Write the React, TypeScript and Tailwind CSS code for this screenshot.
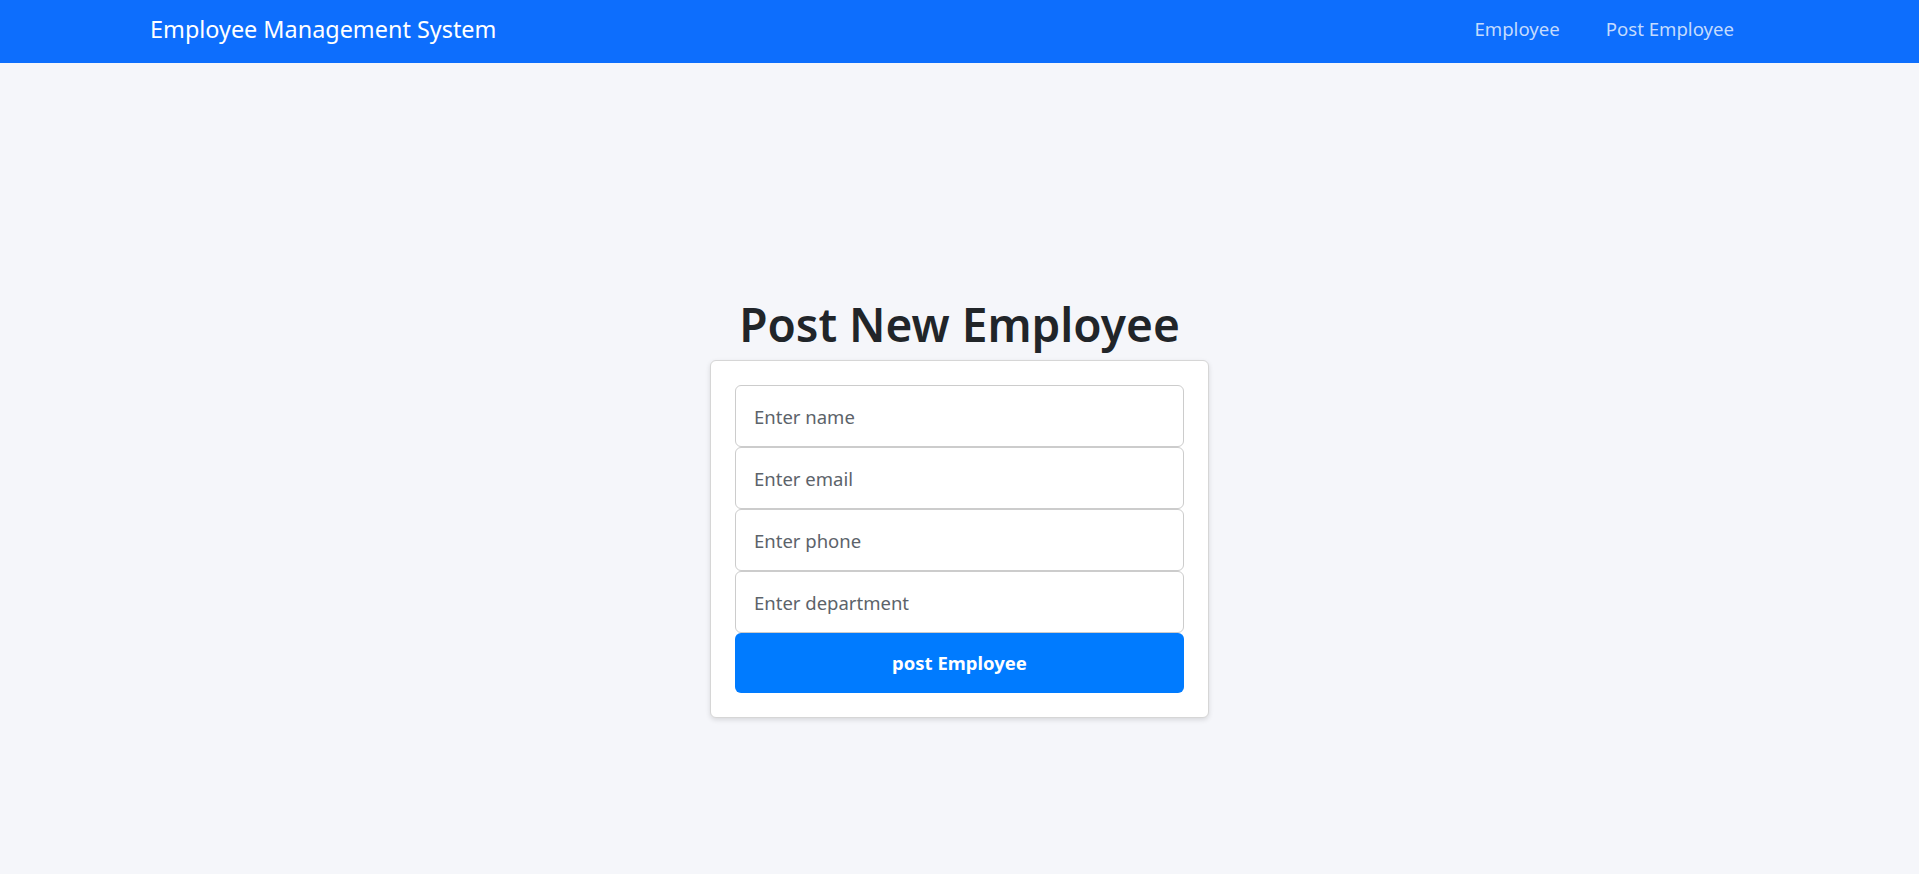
import React from 'react';

const fields = [
  { name: 'name', placeholder: 'Enter name' },
  { name: 'email', placeholder: 'Enter email' },
  { name: 'phone', placeholder: 'Enter phone' },
  { name: 'department', placeholder: 'Enter department' },
];

const Navbar: React.FC = () => (
  <header className="h-[63px] bg-[#0d6efd] flex items-center justify-between pl-[150px] pr-[185px] pb-[4px]">
    <a href="#" className="text-[23.4px] text-white leading-none">
      Employee Management System
    </a>
    <nav className="flex items-center gap-[46px] text-[18.6px] leading-none">
      <a href="#" className="text-[#c3dbfe]">Employee</a>
      <a href="#" className="text-[#c3dbfe]">Post Employee</a>
    </nav>
  </header>
);

const PostEmployee: React.FC = () => (
  <main className="flex flex-col items-center pt-[226px]">
    <h1 className="text-[46px] font-semibold text-[#212529] leading-[71px]">Post New Employee</h1>
    <div className="w-[499px] bg-white border border-[#d6d6d6] rounded-[6px] shadow-[0_2px_5px_rgba(0,0,0,0.12)] p-[24px]">
      <form className="flex flex-col" onSubmit={(e) => e.preventDefault()}>
        {fields.map((f) => (
          <input
            key={f.name}
            name={f.name}
            type="text"
            placeholder={f.placeholder}
            className="h-[62px] w-full bg-white border border-[#cccccc] rounded-[6px] px-[18px] text-[18.5px] text-[#212529] placeholder:text-[#5c636a] outline-none"
          />
        ))}
        <button
          type="submit"
          className="h-[60px] w-full bg-[#007bff] rounded-[6px] text-white text-[18.5px] font-bold"
        >
          post Employee
        </button>
      </form>
    </div>
  </main>
);

export default function App() {
  return (
    <div className="min-h-[874px] bg-[#f5f6fa] font-['Noto_Sans',sans-serif]">
      <Navbar />
      <PostEmployee />
    </div>
  );
}
